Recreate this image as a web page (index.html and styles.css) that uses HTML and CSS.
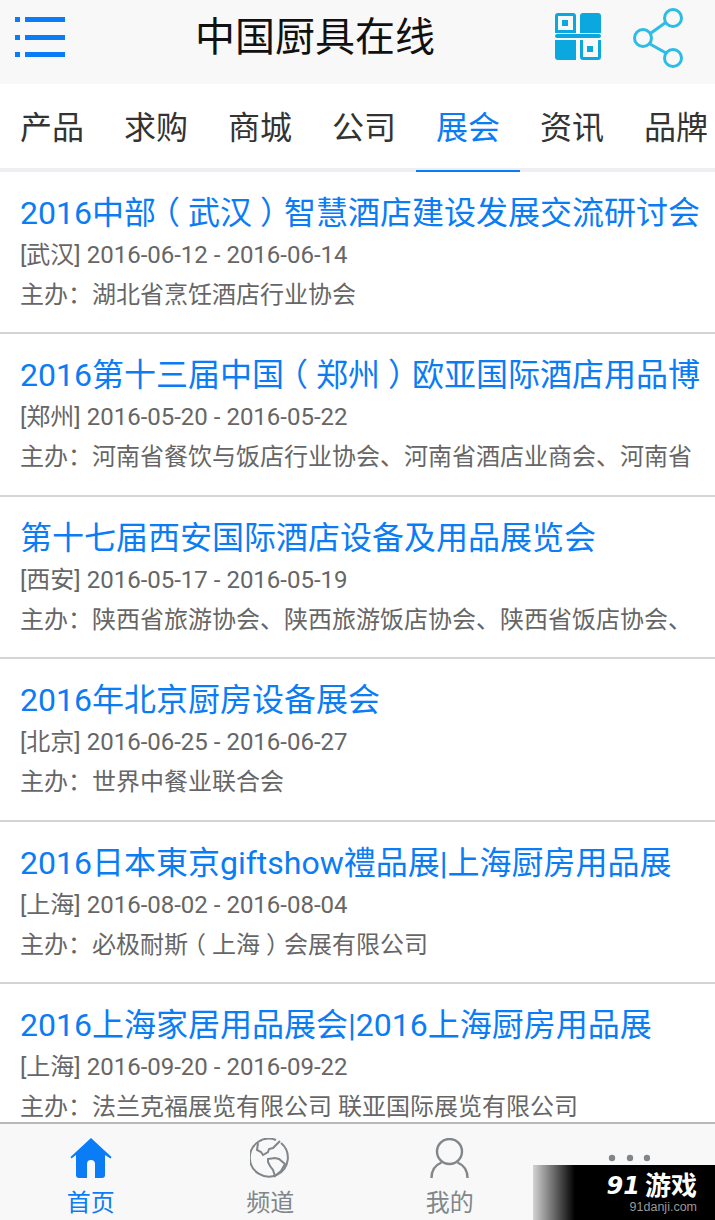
FILE: index.html
```html
<!DOCTYPE html>
<html lang="zh-CN">
<head>
    <meta charset="UTF-8">
    <meta name="viewport" content="width=device-width, initial-scale=1.0">
    <title>中国厨具在线</title>
    <link rel="stylesheet" href="styles.css">
</head>
<body>
    <div class="page">
        <!-- 顶部 -->
        <header class="top-bar">
            <svg class="menu-icon" width="50" height="40" viewBox="0 0 50 40" fill="#0a7cf5">
                <rect x="0" y="0" width="5" height="5"/>
                <rect x="10" y="0" width="40" height="5"/>
                <rect x="0" y="18" width="5" height="5"/>
                <rect x="10" y="18" width="40" height="5"/>
                <rect x="0" y="35" width="5" height="5"/>
                <rect x="10" y="35" width="40" height="5"/>
            </svg>
            <h1 class="site-title">中国厨具在线</h1>
            <svg class="qr-icon" width="46" height="47" viewBox="0 0 46 47" fill="#0ba8e0">
                <path d="M3 0h15a3 3 0 0 1 3 3v17H0V3a3 3 0 0 1 3-3zM3 3v14h15V3z" fill-rule="evenodd"/>
                <rect x="7" y="7" width="6" height="6"/>
                <path d="M28 0h15a3 3 0 0 1 3 3v17H25V3a3 3 0 0 1 3-3z"/>
                <rect x="0" y="21" width="46" height="4" rx="2"/>
                <path d="M0 27h21v20H3a3 3 0 0 1-3-3z"/>
                <path d="M25 27h3v17h15V27h3v17a3 3 0 0 1-3 3H28a3 3 0 0 1-3-3z"/>
                <rect x="32" y="33" width="6" height="6"/>
            </svg>
            <svg class="share-icon" width="52" height="60" viewBox="0 0 52 60" fill="none" stroke="#2cbce6" stroke-width="3">
                <circle cx="40" cy="10" r="8.5"/>
                <circle cx="10" cy="30" r="8.5"/>
                <circle cx="40" cy="50" r="8.5"/>
                <path d="M18 25L32 15M17 36L33 45"/>
            </svg>
        </header>

        <!-- 分类 -->
        <nav class="tabs">
            <a class="tab">产品</a>
            <a class="tab">求购</a>
            <a class="tab">商城</a>
            <a class="tab">公司</a>
            <a class="tab active">展会</a>
            <a class="tab">资讯</a>
            <a class="tab">品牌</a>
        </nav>

        <!-- 展会列表 -->
        <main class="list">
            <div class="item">
                <div class="item-title">2016中部<span class="paren">（</span>武汉<span class="paren">）</span>智慧酒店建设发展交流研讨会</div>
                <div class="item-meta">[武汉] 2016-06-12 - 2016-06-14</div>
                <div class="item-meta">主办：湖北省烹饪酒店行业协会</div>
            </div>
            <div class="item">
                <div class="item-title">2016第十三届中国<span class="paren">（</span>郑州<span class="paren">）</span>欧亚国际酒店用品博</div>
                <div class="item-meta">[郑州] 2016-05-20 - 2016-05-22</div>
                <div class="item-meta">主办：河南省餐饮与饭店行业协会、河南省酒店业商会、河南省</div>
            </div>
            <div class="item">
                <div class="item-title">第十七届西安国际酒店设备及用品展览会</div>
                <div class="item-meta">[西安] 2016-05-17 - 2016-05-19</div>
                <div class="item-meta">主办：陕西省旅游协会、陕西旅游饭店协会、陕西省饭店协会、</div>
            </div>
            <div class="item">
                <div class="item-title">2016年北京厨房设备展会</div>
                <div class="item-meta">[北京] 2016-06-25 - 2016-06-27</div>
                <div class="item-meta">主办：世界中餐业联合会</div>
            </div>
            <div class="item">
                <div class="item-title">2016日本東京giftshow禮品展|上海厨房用品展</div>
                <div class="item-meta">[上海] 2016-08-02 - 2016-08-04</div>
                <div class="item-meta">主办：必极耐斯<span class="paren">（</span>上海<span class="paren">）</span>会展有限公司</div>
            </div>
            <div class="item">
                <div class="item-title">2016上海家居用品展会|2016上海厨房用品展</div>
                <div class="item-meta">[上海] 2016-09-20 - 2016-09-22</div>
                <div class="item-meta">主办：法兰克福展览有限公司 联亚国际展览有限公司</div>
            </div>
        </main>

        <!-- 底部导航 -->
        <footer class="bottom-bar">
            <a class="bottom-item active">
                <svg width="42" height="40" viewBox="0 0 42 40">
                    <path d="M21 0L41.500 19l-1 1.500L35 17v20a3 3 0 0 1-3 3h-7V26a4 4 0 0 0-8 0v14H9a3 3 0 0 1-3-3V17L1.500 20.500l-1-1.500z" fill="#0a7cf5"/>
                </svg>
                <span>首页</span>
            </a>
            <a class="bottom-item">
                <svg width="40" height="40" viewBox="0 0 40 40" fill="none" stroke="#80868a" stroke-width="2">
                    <path d="M31 5A19 19 0 1 1 26 2"/>
                    <path d="M8 5l-1 7 4 2 2 3 5-3 1-3 4-1 7-7"/>
                    <path d="M18 21l7-1 4 1 6 5-4 7-6 5-2-6-3-4-2-4z"/>
                </svg>
                <span>频道</span>
            </a>
            <a class="bottom-item">
                <svg width="40" height="40" viewBox="0 0 40 40" fill="none" stroke="#80868a" stroke-width="2.400">
                    <circle cx="19.500" cy="13.500" r="12.500"/>
                    <path d="M1.500 40c0-8 4-13 10-15.500M37.500 40c0-8-4-13-10-15.500"/>
                </svg>
                <span>我的</span>
            </a>
            <a class="bottom-item">
                <svg width="42" height="40" viewBox="0 0 42 40" fill="#80868a">
                    <circle cx="4" cy="20" r="3.200"/>
                    <circle cx="22" cy="20" r="3.200"/>
                    <circle cx="39" cy="20" r="3.200"/>
                </svg>
            </a>
        </footer>

        <!-- 水印 -->
        <div class="watermark">
            <div class="wm-logo"><span class="wm-num">91</span><span>游戏</span></div>
            <div class="wm-url">91danji.com</div>
        </div>
    </div>
</body>
</html>
```

FILE: styles.css
```css
* {
    box-sizing: border-box;
}

html, body {
    margin: 0;
    padding: 0;
}

body {
    font-family: Roboto, "Noto Sans CJK SC", sans-serif;
    background-color: #fff;
}

.page {
    position: relative;
    width: 715px;
    height: 1220px;
    overflow: hidden;
    display: flex;
    flex-direction: column;
}

.top-bar {
    height: 84px;
    flex: none;
    display: flex;
    align-items: center;
    background-color: #f8f8f8;
    padding: 0 0 8px 15px;
}

.menu-icon {
    flex: none;
    margin-top: -2px;
}

.site-title {
    margin: 0 0 0 130px;
    width: 240px;
    flex: none;
    font-size: 40px;
    line-height: 1.2;
    font-weight: 400;
    color: #111;
    white-space: nowrap;
}

.qr-icon {
    flex: none;
    margin-left: 120px;
    margin-top: -3px;
}

.share-icon {
    flex: none;
    margin-left: 32px;
}

.tabs {
    height: 88px;
    flex: none;
    display: flex;
    border-bottom: 4px solid #efeff3;
    background-color: #fff;
}

.tab {
    flex: none;
    width: 104px;
    height: 88px;
    font-size: 32px;
    line-height: 88px;
    text-align: center;
    color: #333;
}

.tab.active {
    color: #0a7cf5;
    border-bottom: 2px solid #0a7cf5;
}

.list {
    flex: 1;
    min-height: 0;
    overflow: hidden;
}

.item {
    height: 162.4px;
    padding: 20px 0 0 20px;
    border-bottom: 2px solid #d4d4d4;
    white-space: nowrap;
    overflow: hidden;
}

.item-title {
    font-size: 32px;
    line-height: 43px;
    color: #0a7cf5;
}

.item-meta {
    font-size: 24px;
    line-height: 40px;
    color: #666;
}

/* 括号居中 */
.paren {
    font-feature-settings: "halt";
    padding: 0 0.25em;
}

.bottom-bar {
    height: 98px;
    flex: none;
    display: flex;
    border-top: 2px solid #b8b8b8;
    background-color: #f8f8f8;
    padding-left: 1px;
}

.bottom-item {
    flex: none;
    width: 179.5px;
    display: flex;
    flex-direction: column;
    align-items: center;
    padding-top: 14px;
    font-size: 24px;
    line-height: 30px;
    color: #80868a;
}

.bottom-item span {
    margin-top: 10px;
}

.bottom-item.active {
    color: #0a7cf5;
}

.watermark {
    position: absolute;
    right: 0;
    bottom: 0;
    width: 182px;
    height: 55px;
    padding: 8px 18px 0 0;
    display: flex;
    flex-direction: column;
    align-items: flex-end;
    color: #fff;
    background: linear-gradient(to right, rgba(0, 0, 0, 0.15), #000 23%);
}

.wm-logo {
    display: flex;
    align-items: center;
    gap: 5px;
    font-size: 26px;
    line-height: 26px;
    font-weight: 700;
}

.wm-num {
    font-family: "DejaVu Sans", sans-serif;
    font-size: 24px;
    font-style: italic;
}

.wm-url {
    font-family: "Liberation Sans", sans-serif;
    font-size: 12.5px;
    line-height: 17px;
    color: #999;
}
```
